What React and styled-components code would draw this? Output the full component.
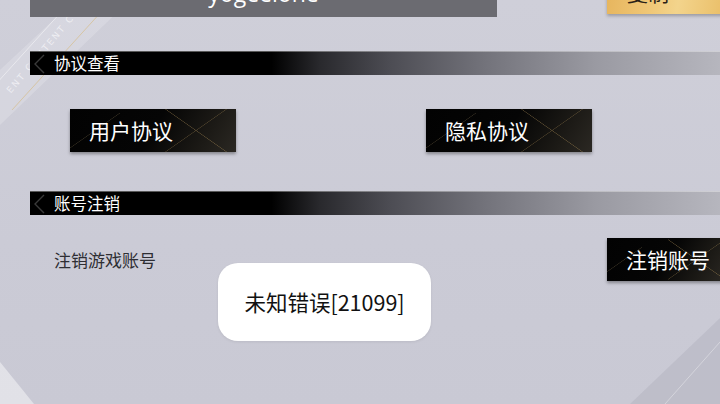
import React from 'react';
import styled, { createGlobalStyle } from 'styled-components';

const GlobalStyle = createGlobalStyle`
  html, body {
    margin: 0;
    padding: 0;
  }
  body {
    font-family: "Noto Sans CJK SC", "Noto Sans", sans-serif;
  }
`

const Page = styled.div`
  position: relative;
  width: 720px;
  height: 404px;
  overflow: hidden;
  background: linear-gradient(180deg, #cfcfd9 0%, #cbcbd6 60%, #c9c9d4 100%);
`

const Decor = styled.div`
  position: absolute;
  inset: 0;
  pointer-events: none;
`

const Watermark = styled.div`
  position: absolute;
  left: -18px;
  top: 30px;
  transform: rotate(-50deg);
  font-family: "DejaVu Sans", sans-serif;
  font-size: 9px;
  letter-spacing: 2px;
  color: rgba(255, 255, 255, 0.6);
  white-space: nowrap;
`

const Content = styled.div`
  position: relative;
  display: flex;
  flex-direction: column;
  padding-left: 30px;
`

const TopRow = styled.div`
  display: flex;
  align-items: flex-start;
  margin-top: -26px;
  height: 43px;
`

const NameBox = styled.div`
  flex-shrink: 0;
  width: 467px;
  height: 43px;
  background: #6b6b71;
  overflow: hidden;
  display: flex;
  justify-content: center;
  align-items: flex-end;
  color: #fff;
  font-family: "Open Sans", sans-serif;
  font-size: 23px;
  line-height: 1;
  & > span {
    margin-bottom: 12px;
  }
`

const GoldButton = styled.div`
  flex-shrink: 0;
  margin-left: 110px;
  width: 120px;
  height: 40px;
  background: linear-gradient(100deg, #e6b45c 0%, #f0c878 40%, #f3d48c 60%, #e9bd66 100%);
  box-shadow: 0 2px 3px rgba(0, 0, 0, 0.25);
  color: #2a2116;
  font-size: 21px;
  display: flex;
  align-items: flex-end;
  padding-left: 20px;
  box-sizing: border-box;
  overflow: hidden;
  & > span {
    margin-bottom: 11px;
    line-height: 1;
  }
`

const SectionBar = styled.div`
  position: relative;
  height: 23px;
  margin-top: ${p => p.$top}px;
  background: linear-gradient(90deg, #000 0%, #000 35%, #29292d 42%, #4c4c53 52%, #73737b 66%, #9a9aa2 82%, #b6b6be 100%);
  border-top: 1px solid rgba(255, 255, 255, 0.35);
  display: flex;
  align-items: center;
  padding-left: 24px;
  color: #fff;
  font-size: 16.5px;
  line-height: 1;
`

const Chevron = styled.svg`
  position: absolute;
  left: 2px;
  top: 2px;
`

const ButtonRow = styled.div`
  display: flex;
  gap: 190px;
  margin-top: 34px;
  padding-left: 40px;
`

const DarkButton = styled.div`
  position: relative;
  flex-shrink: 0;
  width: ${p => p.$w}px;
  height: 43px;
  margin-right: ${p => p.$mr || 0}px;
  background: linear-gradient(120deg, #020202 0%, #050505 50%, #1c1a16 80%, #2b2823 100%);
  box-shadow: 0 2px 3px rgba(0, 0, 0, 0.35);
  display: flex;
  align-items: center;
  padding-left: ${p => p.$pad}px;
  box-sizing: border-box;
  color: #fff;
  font-size: 21px;
  line-height: 1;
  overflow: hidden;
  &::before {
    content: "";
    position: absolute;
    right: 0;
    top: 0;
    width: 48%;
    height: 100%;
    background:
      linear-gradient(35deg, transparent calc(50% - 0.6px), rgba(170, 140, 85, 0.45) 50%, transparent calc(50% + 0.6px)),
      linear-gradient(-35deg, transparent calc(50% - 0.6px), rgba(170, 140, 85, 0.35) 50%, transparent calc(50% + 0.6px));
  }
  &::after {
    content: "";
    position: absolute;
    left: 0;
    bottom: 0;
    width: 30%;
    height: 100%;
    background: linear-gradient(-35deg, transparent calc(50% - 0.6px), rgba(150, 130, 90, 0.3) 50%, transparent calc(50% + 0.6px));
  }
  & > span {
    position: relative;
    z-index: 1;
  }
`

const CancelRow = styled.div`
  display: flex;
  justify-content: space-between;
  align-items: center;
  margin-top: 23px;
  padding-left: 24px;
`

const Label = styled.div`
  color: #2e2e33;
  font-size: 17px;
  line-height: 1;
`

const Toast = styled.div`
  position: absolute;
  left: 218px;
  top: 263px;
  width: 213px;
  height: 78px;
  border-radius: 20px;
  background: #fff;
  display: flex;
  align-items: center;
  justify-content: center;
  color: #111;
  font-size: 21.5px;
  line-height: 1;
  box-shadow: 0 1px 3px rgba(0, 0, 0, 0.08);
`

const App = () => {
  return (
    <Page>
      <GlobalStyle />
      <Decor>
        <svg width="720" height="404" style={{ position: 'absolute', left: 0, top: 0 }}>
          <polygon points="0,70 75,0 130,0 0,125" fill="rgba(255,255,255,0.18)" />
          <line x1="12" y1="110" x2="112" y2="0" stroke="rgba(214,190,140,0.7)" strokeWidth="1" />
          <line x1="-5" y1="85" x2="72" y2="0" stroke="rgba(255,255,255,0.45)" strokeWidth="1" />
          <polygon points="0,362 0,404 34,404" fill="rgba(255,255,255,0.45)" />
          <polygon points="720,318 720,404 630,404" fill="rgba(150,150,165,0.22)" />
          <line x1="720" y1="342" x2="665" y2="404" stroke="rgba(255,255,255,0.35)" strokeWidth="1" />
        </svg>
        <Watermark>ENT CONTENT CONTENT</Watermark>
      </Decor>
      <Content>
        <TopRow>
          <NameBox><span>yogeelone</span></NameBox>
          <GoldButton><span>复制</span></GoldButton>
        </TopRow>
        <SectionBar $top={34}>
          <Chevron width="14" height="20" viewBox="0 0 14 20">
            <polyline points="12,1 3,10 12,19" fill="none" stroke="#3a3a3a" strokeWidth="1.4" />
          </Chevron>
          协议查看
        </SectionBar>
        <ButtonRow>
          <DarkButton $w={166} $pad={19}><span>用户协议</span></DarkButton>
          <DarkButton $w={166} $pad={19}><span>隐私协议</span></DarkButton>
        </ButtonRow>
        <SectionBar $top={39}>
          <Chevron width="14" height="20" viewBox="0 0 14 20">
            <polyline points="12,1 3,10 12,19" fill="none" stroke="#3a3a3a" strokeWidth="1.4" />
          </Chevron>
          账号注销
        </SectionBar>
        <CancelRow>
          <Label>注销游戏账号</Label>
          <DarkButton $w={118} $pad={19} $mr={-5}><span>注销账号</span></DarkButton>
        </CancelRow>
      </Content>
      <Toast>未知错误[21099]</Toast>
    </Page>
  );
}

export default App;
